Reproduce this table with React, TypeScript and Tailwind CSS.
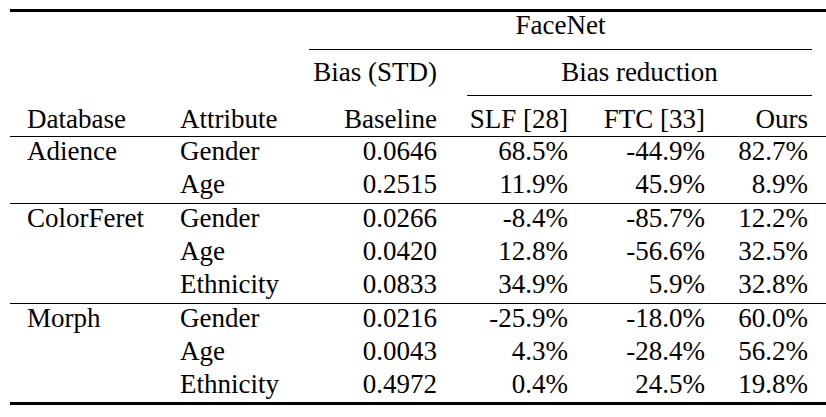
import React from 'react'

const cols = 'grid grid-cols-[160px_130px_147px_131px_137px_111px]'

type Row = { db?: string; attr: string; base: string; slf: string; ftc: string; ours: string }

const groups: Row[][] = [
  [
    { db: 'Adience', attr: 'Gender', base: '0.0646', slf: '68.5%', ftc: '-44.9%', ours: '82.7%' },
    { attr: 'Age', base: '0.2515', slf: '11.9%', ftc: '45.9%', ours: '8.9%' },
  ],
  [
    { db: 'ColorFeret', attr: 'Gender', base: '0.0266', slf: '-8.4%', ftc: '-85.7%', ours: '12.2%' },
    { attr: 'Age', base: '0.0420', slf: '12.8%', ftc: '-56.6%', ours: '32.5%' },
    { attr: 'Ethnicity', base: '0.0833', slf: '34.9%', ftc: '5.9%', ours: '32.8%' },
  ],
  [
    { db: 'Morph', attr: 'Gender', base: '0.0216', slf: '-25.9%', ftc: '-18.0%', ours: '60.0%' },
    { attr: 'Age', base: '0.0043', slf: '4.3%', ftc: '-28.4%', ours: '56.2%' },
    { attr: 'Ethnicity', base: '0.4972', slf: '0.4%', ftc: '24.5%', ours: '19.8%' },
  ],
]

function BodyRow({ r }: { r: Row }) {
  return (
    <div className={`${cols} h-[33px] pt-[1px]`}>
      <div className="pl-[17px]">{r.db ?? ''}</div>
      <div className="pl-[10px]">{r.attr}</div>
      <div className="pr-[10px] text-right">{r.base}</div>
      <div className="pr-[10px] text-right">{r.slf}</div>
      <div className="pr-[10px] text-right">{r.ftc}</div>
      <div className="pr-[18px] text-right">{r.ours}</div>
    </div>
  )
}

export default function App() {
  return (
    <div className="w-[826px] h-[417px] bg-white overflow-hidden">
      <div className="ml-[10px] mt-[9px] w-[816px] font-['Liberation_Serif','Times_New_Roman',serif] text-[27px] leading-[27px] text-black">
        {/* top rule */}
        <div className="h-[3px] bg-black" />

        {/* header row 1 */}
        <div className={`${cols} h-[37px]`}>
          <div className="col-start-3 col-span-4 ml-[9px] mr-[14px] text-center">FaceNet</div>
        </div>
        <div className={cols}>
          <div className="col-start-3 col-span-4 ml-[9px] mr-[14px] h-px bg-black" />
        </div>

        {/* header row 2 */}
        <div className={`${cols} h-[45px] pt-[9px]`}>
          <div className="col-start-3 pr-[10px] text-right">Bias (STD)</div>
          <div className="col-span-3 ml-[20px] mr-[14px] text-center">Bias reduction</div>
        </div>
        <div className={cols}>
          <div className="col-start-4 col-span-3 ml-[20px] mr-[14px] h-px bg-black" />
        </div>

        {/* header row 3 */}
        <div className={`${cols} h-[40px] pt-[10px]`}>
          <div className="pl-[17px]">Database</div>
          <div className="pl-[10px]">Attribute</div>
          <div className="pr-[10px] text-right">Baseline</div>
          <div className="pr-[10px] text-right">SLF [28]</div>
          <div className="pr-[10px] text-right">FTC [33]</div>
          <div className="pr-[18px] text-right">Ours</div>
        </div>

        {groups.map((g, i) => (
          <div key={i} className="border-t border-black">
            {g.map((r, j) => (
              <BodyRow key={j} r={r} />
            ))}
          </div>
        ))}

        {/* bottom rule */}
        <div className="-mt-[1px] h-[3px] bg-black" />
      </div>
    </div>
  )
}
